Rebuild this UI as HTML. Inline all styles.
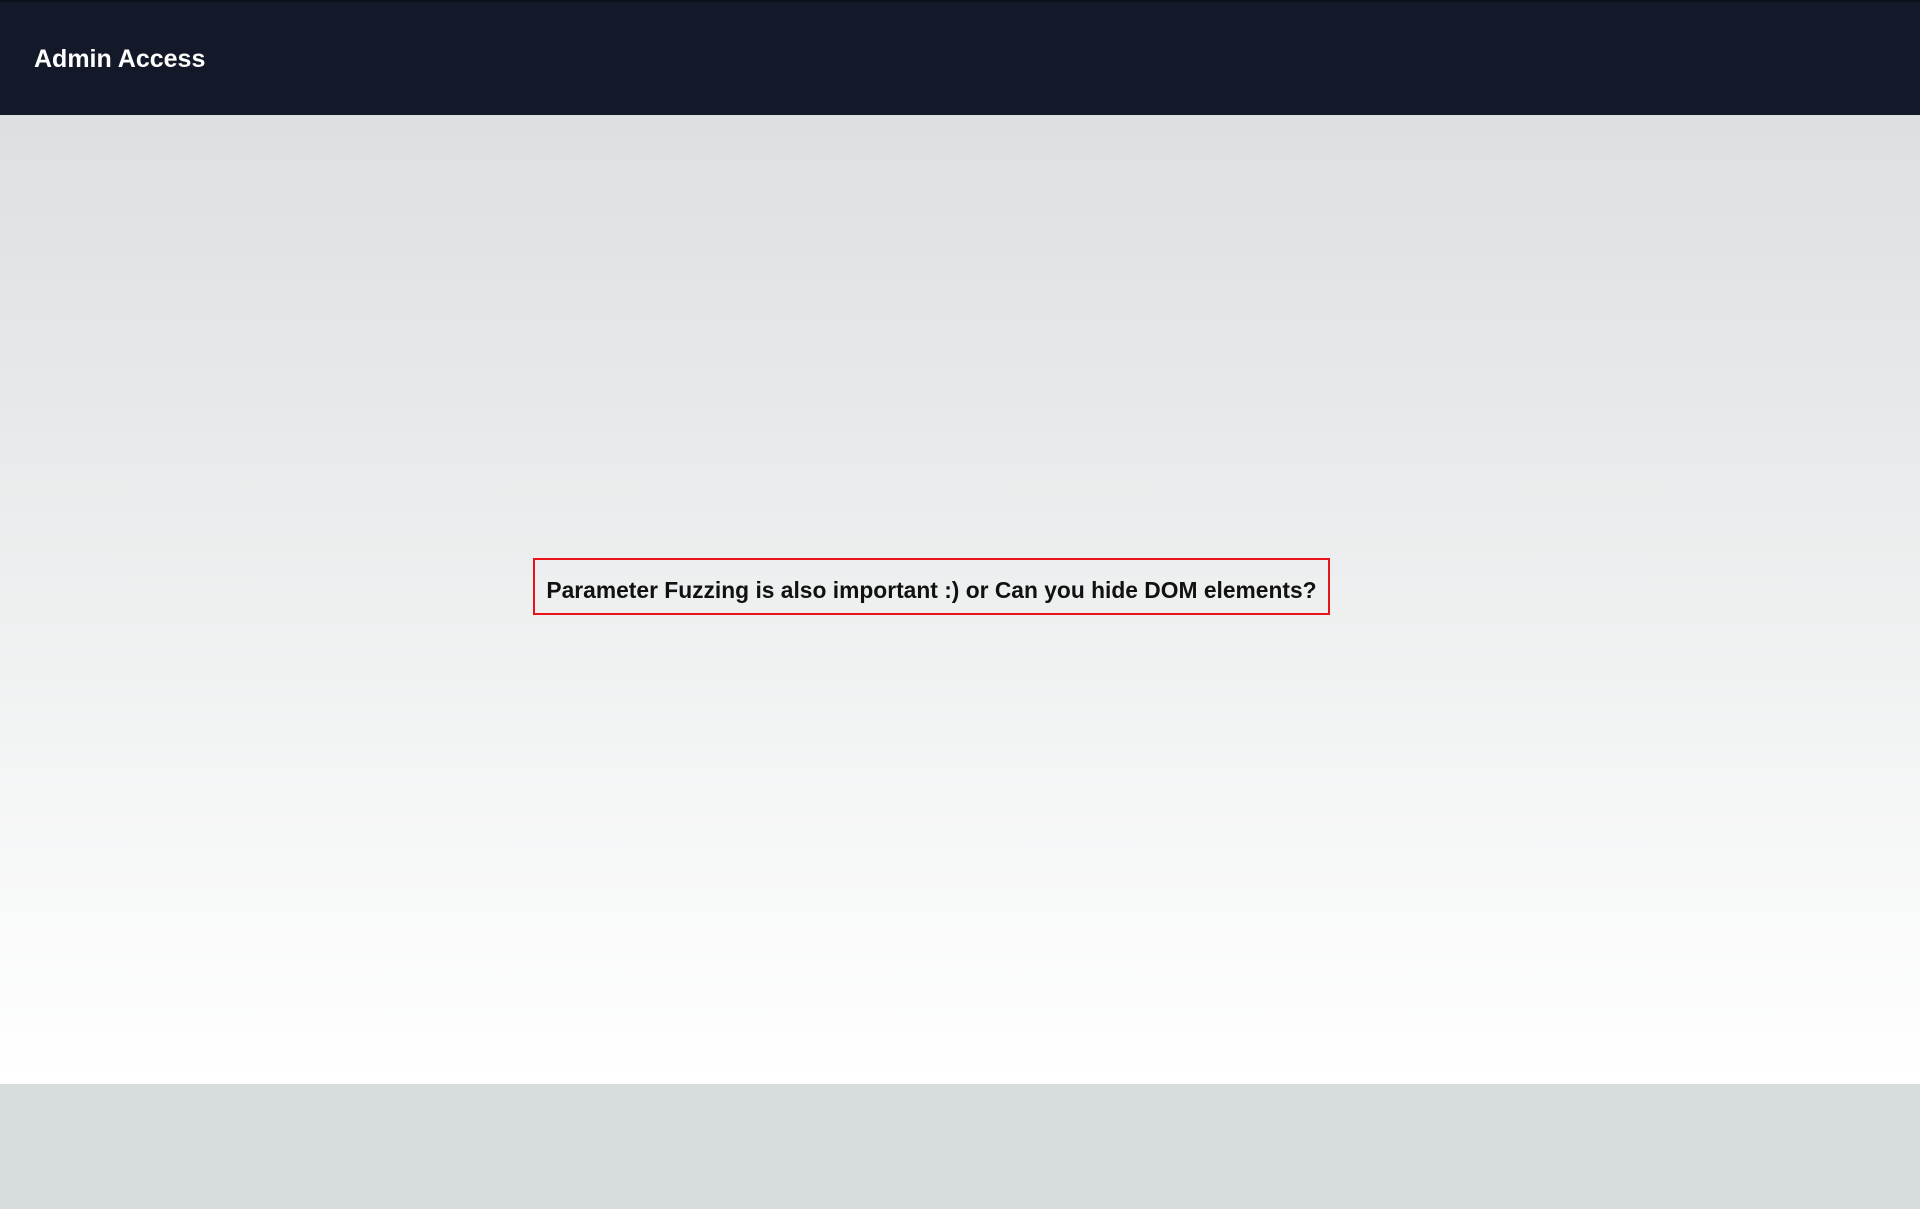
<!DOCTYPE html>
<html><head><meta charset="utf-8"><style>
html,body{margin:0;padding:0;width:1920px;height:1209px;overflow:hidden;font-family:"Liberation Sans",sans-serif}
.hdr{position:absolute;left:0;top:0;width:1920px;height:115px;background:#131928;border-top:2px solid #0b0f18;box-sizing:border-box}
.hdr h1{position:absolute;left:34px;top:42px;margin:0;color:#fff;font-size:25px;font-weight:bold;line-height:30px}
.main{position:absolute;left:0;top:115px;width:1920px;height:969px;background:linear-gradient(#dce0e1,#ffffff)}
.box{position:absolute;left:533px;top:558px;width:797px;height:57px;box-sizing:border-box;border:2px solid #e8141a;padding-top:7px;display:flex;align-items:center;justify-content:center;font-weight:bold;font-size:22.8px;color:#111;white-space:nowrap}
.ftr{position:absolute;left:0;top:1084px;width:1920px;height:125px;background:#d7dddd}
</style></head><body>
<div class="hdr"><h1>Admin Access</h1></div>
<div class="main"></div>
<div class="box">Parameter Fuzzing is also important :) or Can you hide DOM elements?</div>
<div class="ftr"></div>
</body></html>
